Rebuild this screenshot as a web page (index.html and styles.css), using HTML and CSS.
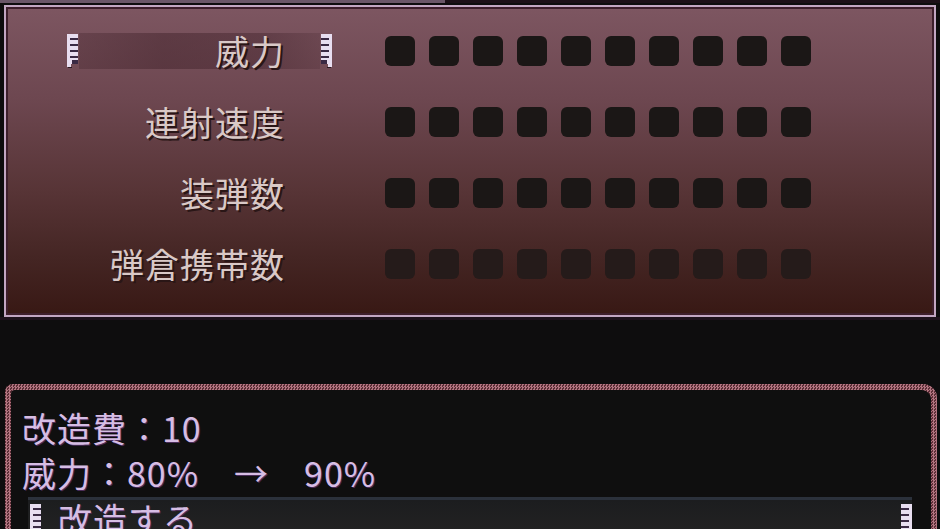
FILE: index.html
```html
<!DOCTYPE html>
<html lang="ja">
<head>
<meta charset="utf-8">
<link rel="stylesheet" href="styles.css">
</head>
<body>
<div class="screen">
  <div class="topstrip"></div>
  <div class="panel">
    <div class="row">
      <svg class="cur" width="12" height="34" viewBox="0 0 12 34">
        <rect x="0" y="0" width="11" height="30" fill="#e8def0"/>
        <rect x="3" y="4" width="8" height="2" fill="#3a2a44"/>
        <rect x="3" y="10" width="8" height="2" fill="#3a2a44"/>
        <rect x="3" y="16" width="8" height="2" fill="#3a2a44"/>
        <rect x="3" y="22" width="8" height="2" fill="#3a2a44"/>
        <rect x="5" y="26" width="6" height="4" fill="#3a2a44"/>
        <rect x="0" y="30" width="4" height="3" fill="#e8def0"/>
        <rect x="1" y="33" width="4" height="1" fill="#2a1a22"/>
      </svg>
      <div class="label sel">威力</div>
      <svg class="cur flip" width="12" height="34" viewBox="0 0 12 34">
        <rect x="0" y="0" width="11" height="30" fill="#e8def0"/>
        <rect x="3" y="4" width="8" height="2" fill="#3a2a44"/>
        <rect x="3" y="10" width="8" height="2" fill="#3a2a44"/>
        <rect x="3" y="16" width="8" height="2" fill="#3a2a44"/>
        <rect x="3" y="22" width="8" height="2" fill="#3a2a44"/>
        <rect x="5" y="26" width="6" height="4" fill="#3a2a44"/>
        <rect x="0" y="30" width="4" height="3" fill="#e8def0"/>
        <rect x="1" y="33" width="4" height="1" fill="#2a1a22"/>
      </svg>
      <div class="dots"><i></i><i></i><i></i><i></i><i></i><i></i><i></i><i></i><i></i><i></i></div>
    </div>
    <div class="row">
      <span class="cur ghost"></span>
      <div class="label">連射速度</div>
      <span class="cur ghost"></span>
      <div class="dots"><i></i><i></i><i></i><i></i><i></i><i></i><i></i><i></i><i></i><i></i></div>
    </div>
    <div class="row">
      <span class="cur ghost"></span>
      <div class="label">装弾数</div>
      <span class="cur ghost"></span>
      <div class="dots"><i></i><i></i><i></i><i></i><i></i><i></i><i></i><i></i><i></i><i></i></div>
    </div>
    <div class="row">
      <span class="cur ghost"></span>
      <div class="label">弾倉携帯数</div>
      <span class="cur ghost"></span>
      <div class="dots faded"><i></i><i></i><i></i><i></i><i></i><i></i><i></i><i></i><i></i><i></i></div>
    </div>
  </div>
  <div class="gap"></div>
  <div class="msgbox">
    <div class="msginner">
      <div class="line">改造費：<span class="num">10</span></div>
      <div class="line">威力：<span class="num">80%</span>　→　<span class="num">90%</span></div>
      <div class="choice">
        <svg class="ccur" width="12" height="34" viewBox="0 0 12 34">
          <rect x="0" y="0" width="11" height="30" fill="#e8def0"/>
          <rect x="3" y="4" width="8" height="2" fill="#3a2a44"/>
          <rect x="3" y="10" width="8" height="2" fill="#3a2a44"/>
          <rect x="3" y="16" width="8" height="2" fill="#3a2a44"/>
          <rect x="3" y="22" width="8" height="2" fill="#3a2a44"/>
        </svg>
        <span class="ctext">改造する</span>
        <svg class="ccur flip" width="12" height="34" viewBox="0 0 12 34">
          <rect x="0" y="0" width="11" height="30" fill="#e8def0"/>
          <rect x="3" y="4" width="8" height="2" fill="#3a2a44"/>
          <rect x="3" y="10" width="8" height="2" fill="#3a2a44"/>
          <rect x="3" y="16" width="8" height="2" fill="#3a2a44"/>
          <rect x="3" y="22" width="8" height="2" fill="#3a2a44"/>
        </svg>
      </div>
    </div>
  </div>
</div>
</body>
</html>
```
FILE: styles.css
```css
html, body {
  margin: 0;
  padding: 0;
  background: #0e0d0e;
}
.screen {
  width: 940px;
  height: 529px;
  overflow: hidden;
  font-family: "Noto Sans CJK JP", "Noto Sans", sans-serif;
}
.topstrip {
  height: 3px;
  background: linear-gradient(to right, #6a5668 0, #6a5668 445px, #1c1018 445px, #1c1018 100%);
}
.panel {
  margin: 2px 4px 0 4px;
  height: 312px;
  box-sizing: border-box;
  border: 2px solid #c2a6c2;
  box-shadow: inset 0 0 0 2px #3e1f2c;
  background: linear-gradient(to bottom, #7d5661 0%, #6d4750 30%, #573436 60%, #442523 82%, #381814 100%);
  padding-top: 8px;
  display: grid;
  grid-template-rows: repeat(4, 71px);
}
.row {
  display: flex;
  align-items: center;
  padding-left: 61px;
}
.cur {
  display: block;
  width: 12px;
  height: 34px;
  flex: none;
}
.cur.flip, .ccur.flip {
  transform: scaleX(-1);
}
.ghost {
  visibility: hidden;
}
.label {
  width: 241px;
  height: 36px;
  box-sizing: border-box;
  padding-right: 35px;
  text-align: right;
  font-size: 34px;
  line-height: 36px;
  letter-spacing: 1px;
  color: #d9c9c7;
  text-shadow: 2px 2px 0 #2a1616;
}
.label.sel {
  background: linear-gradient(to right, rgba(60,30,38,0.3) 0%, rgba(60,30,38,0.45) 35%, rgba(60,30,38,0.4) 75%, rgba(60,30,38,0.2) 100%);
}
.dots {
  display: flex;
  gap: 14px;
  margin-left: 53px;
}
.dots i {
  display: block;
  width: 30px;
  height: 30px;
  border-radius: 6px;
  background: #1b1716;
}
.dots.faded i {
  background: #251b1a;
}
.gap {
  height: 67px;
  border-top: 3px solid #1e121c;
  box-sizing: border-box;
}
.msgbox {
  margin-left: 5px;
  width: 932px;
  height: 160px;
  box-sizing: border-box;
  padding: 6px 6px 0 6px;
  border-radius: 8px 14px 0 0;
  background: repeating-conic-gradient(#b27480 0 25%, #5c2e36 0 50%) 0 0 / 3px 3px;
}
.msginner {
  height: 100%;
  background: #0f0f0f;
  border-radius: 4px 9px 0 0;
  padding: 15px 0 0 11px;
  box-sizing: border-box;
}
.line {
  height: 45px;
  line-height: 45px;
  font-size: 34px;
  letter-spacing: 1px;
  color: #d6bde4;
  text-shadow: 1px 1px 0 #4a2c58;
}
.num {
  letter-spacing: 1px;
}
.choice {
  margin: 2px 19px 0 6px;
  height: 40px;
  border-top: 3px solid #2b313b;
  background: linear-gradient(to bottom, #1c1d1f, #232323);
  display: flex;
  align-items: flex-start;
  padding: 4px 0 0 2px;
  box-sizing: border-box;
}
.ccur {
  display: block;
  flex: none;
}
.ctext {
  flex: 1;
  margin-left: 16px;
  font-size: 34px;
  line-height: 30px;
  letter-spacing: 1px;
  color: #d6bde4;
  text-shadow: 1px 1px 0 #4a2c58;
}
```
